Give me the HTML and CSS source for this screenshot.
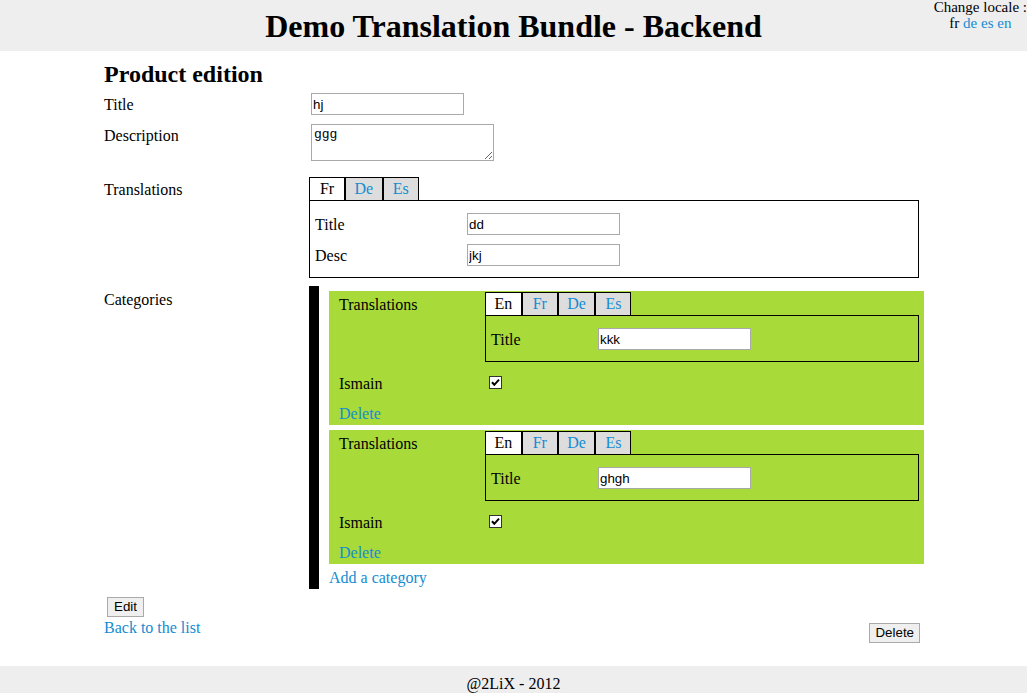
FILE: index.html
```html
<!DOCTYPE html>
<html lang="en">
<head>
<meta charset="utf-8">
<title>Demo Translation Bundle - Backend</title>
<link rel="stylesheet" href="styles.css">
</head>
<body>
<header class="site-header">
  <h1 class="site-title">Demo Translation Bundle - Backend</h1>
  <div class="locale">Change locale :<br>fr <a class="link" href="#">de</a> <a class="link" href="#">es</a> <a class="link" href="#">en</a></div>
</header>
<main class="content">
  <h2 class="page-title">Product edition</h2>
  <form class="form">
    <div class="row">
      <label class="label">Title</label>
      <div class="field"><input class="text" type="text" value="hj"></div>
    </div>
    <div class="row">
      <label class="label">Description</label>
      <div class="field"><textarea class="area">ggg</textarea></div>
    </div>
    <div class="row">
      <label class="label label-tabs">Translations</label>
      <div class="field">
        <div class="tabs"><span class="tab active">Fr</span><a class="tab" href="#">De</a><a class="tab" href="#">Es</a></div>
        <div class="panel panel-wide">
          <div class="prow"><label class="plabel">Title</label><input class="text" type="text" value="dd"></div>
          <div class="prow"><label class="plabel">Desc</label><input class="text" type="text" value="jkj"></div>
        </div>
      </div>
    </div>
    <div class="row">
      <label class="label label-cat">Categories</label>
      <div class="field">
        <div class="categories">
          <div class="category">
            <div class="crow">
              <label class="clabel clabel-tabs">Translations</label>
              <div class="cfield">
                <div class="tabs"><span class="tab active">En</span><a class="tab" href="#">Fr</a><a class="tab" href="#">De</a><a class="tab" href="#">Es</a></div>
                <div class="panel">
                  <div class="prow"><label class="plabel plabel-narrow">Title</label><input class="text" type="text" value="kkk"></div>
                </div>
              </div>
            </div>
            <div class="crow">
              <label class="clabel clabel-check">Ismain</label>
              <div class="cfield"><svg class="check" width="13" height="13" viewBox="0 0 13 13"><rect x="0.5" y="0.5" width="12" height="12" fill="#fff" stroke="#333"/><path d="M3 6.3 L5.3 8.8 L10 3.6" fill="none" stroke="#000" stroke-width="2"/></svg></div>
            </div>
            <a class="link block cat-delete" href="#">Delete</a>
          </div>
          <div class="category">
            <div class="crow">
              <label class="clabel clabel-tabs">Translations</label>
              <div class="cfield">
                <div class="tabs"><span class="tab active">En</span><a class="tab" href="#">Fr</a><a class="tab" href="#">De</a><a class="tab" href="#">Es</a></div>
                <div class="panel">
                  <div class="prow"><label class="plabel plabel-narrow">Title</label><input class="text" type="text" value="ghgh"></div>
                </div>
              </div>
            </div>
            <div class="crow">
              <label class="clabel clabel-check">Ismain</label>
              <div class="cfield"><svg class="check" width="13" height="13" viewBox="0 0 13 13"><rect x="0.5" y="0.5" width="12" height="12" fill="#fff" stroke="#333"/><path d="M3 6.3 L5.3 8.8 L10 3.6" fill="none" stroke="#000" stroke-width="2"/></svg></div>
            </div>
            <a class="link block cat-delete" href="#">Delete</a>
          </div>
          <a class="link block" href="#">Add a category</a>
        </div>
      </div>
    </div>
  </form>
  <div class="actions">
    <div class="actions-main">
      <button class="btn btn-edit" type="button">Edit</button>
      <a class="link block back" href="#">Back to the list</a>
    </div>
    <button class="btn btn-delete" type="button">Delete</button>
  </div>
</main>
<footer class="site-footer">@2LiX - 2012</footer>
</body>
</html>
```

FILE: styles.css
```css
html, body {
  margin: 0;
  padding: 0;
}
body {
  background: #fff;
  color: #000;
  font-family: "Liberation Serif", "Times New Roman", serif;
  font-size: 16px;
  line-height: 18px;
}
.link {
  color: #148cd2;
  text-decoration: none;
}
.block {
  display: block;
}

.site-header {
  position: relative;
  background: #eeeeee;
  height: 51px;
  box-sizing: border-box;
  padding-top: 9px;
}
.site-title {
  margin: 0;
  font-size: 32px;
  line-height: 35px;
  font-weight: bold;
  text-align: center;
}
.locale {
  position: absolute;
  top: -1px;
  right: 0;
  font-size: 15px;
  line-height: 16px;
  text-align: center;
  white-space: nowrap;
}

.content {
  margin-left: 104px;
  width: 820px;
}
.page-title {
  margin: 10px 0 5px;
  font-size: 24px;
  line-height: 27px;
  font-weight: bold;
}
.form {
  display: flex;
  flex-direction: column;
  gap: 8px;
}
.row {
  display: flex;
  align-items: flex-start;
}
.label {
  width: 205px;
  flex: none;
  padding-top: 3px;
}
.label-tabs {
  padding-top: 4px;
}
.label-cat {
  padding-top: 5px;
}
.field {
  flex: 1;
  min-width: 0;
}

.text {
  display: block;
  box-sizing: border-box;
  width: 153px;
  height: 22px;
  margin: 0 0 1px 2px;
  padding: 1px;
  border: 1px solid #a9a9a9;
  font-family: "Liberation Sans", Arial, sans-serif;
  font-size: 13.33px;
  color: #000;
  background: #fff;
}
.area {
  display: block;
  box-sizing: border-box;
  width: 183px;
  height: 37px;
  margin: 0 0 8px 2px;
  padding: 2px;
  border: 1px solid #a9a9a9;
  font-family: "Liberation Mono", "Courier New", monospace;
  font-size: 13px;
  color: #000;
}

.tabs {
  display: flex;
}
.tab {
  display: block;
  box-sizing: border-box;
  min-width: 36px;
  padding: 1px 8.5px 1px;
  border: 1px solid #000;
  border-bottom: 0;
  line-height: 20px;
  text-align: center;
  background: #dddddd;
  color: #148cd2;
  text-decoration: none;
}
.tab.active {
  background: #fff;
  color: #000;
}
.panel {
  display: flex;
  flex-direction: column;
  gap: 8px;
  border: 1px solid #000;
  padding: 12px 5px 10px;
}
.panel-wide {
  width: 610px;
  box-sizing: border-box;
}
.prow {
  display: flex;
  align-items: flex-start;
}
.plabel {
  width: 150px;
  flex: none;
  padding-top: 3px;
}
.plabel-narrow {
  width: 105px;
}

.categories {
  border-left: 10px solid #000;
  padding: 5px 0 2px 10px;
}
.category {
  display: flex;
  flex-direction: column;
  gap: 11px;
  background: #a8da3a;
  padding: 1px 5px 2px 10px;
  margin-bottom: 5px;
}
.crow {
  display: flex;
  align-items: flex-start;
}
.clabel {
  width: 146px;
  flex: none;
}
.clabel-tabs {
  padding-top: 4px;
}
.clabel-check {
  padding-top: 2px;
  line-height: 17px;
}
.cat-delete {
  padding-top: 2px;
}
.cfield {
  flex: 1;
  min-width: 0;
}
.check {
  display: block;
  margin: 3px 0 3px 4px;
}

.actions {
  display: flex;
  justify-content: space-between;
  align-items: flex-start;
  margin-top: 8px;
}
.back {
  padding-top: 2px;
}
.btn {
  display: block;
  box-sizing: border-box;
  height: 20px;
  padding: 1px 6px;
  border: 1px solid #a9a9a9;
  background: #efefef;
  font-family: "Liberation Sans", Arial, sans-serif;
  font-size: 13.33px;
  line-height: 16px;
  color: #000;
}
.btn-edit {
  margin-left: 3px;
}
.btn-delete {
  margin: 26px 4px 0 0;
  padding: 1px 5px;
}

.site-footer {
  margin-top: 23px;
  background: #eeeeee;
  padding-top: 9px;
  text-align: center;
}
```
